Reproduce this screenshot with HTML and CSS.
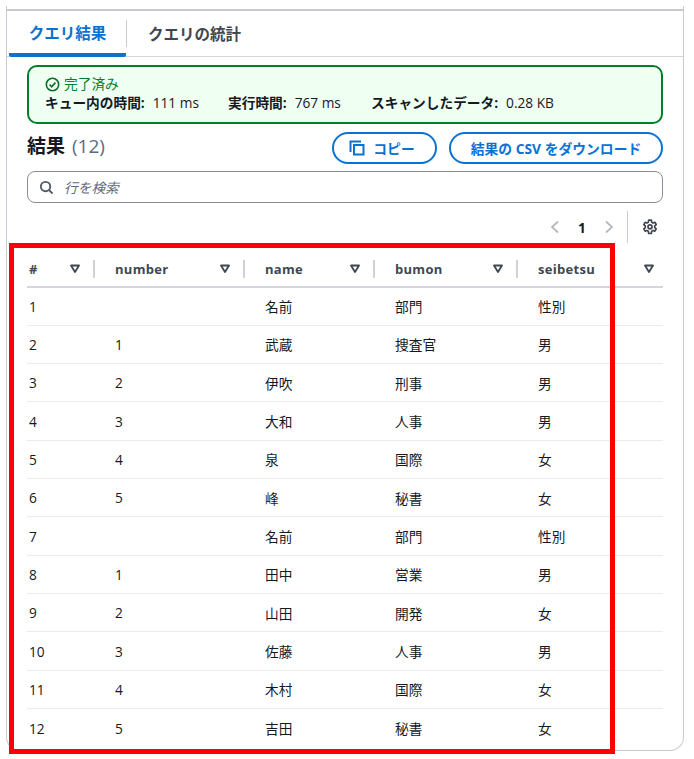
FILE: index.html
```html
<!DOCTYPE html>
<html lang="ja">
<head>
<meta charset="utf-8">
<title>クエリ結果</title>
<link rel="stylesheet" href="styles.css">
</head>
<body>
<main class="card">
  <nav class="tabs">
    <div class="tab active">クエリ結果</div>
    <div class="tab-sep"></div>
    <div class="tab">クエリの統計</div>
  </nav>
  <div class="content">
    <section class="flash">
      <div class="flash-status">
        <svg class="ico-check" viewBox="0 0 16 16"><circle cx="8" cy="8" r="6.6"/><path d="M4.9 8.2l2.2 2.2 4-4.4"/></svg>
        <span>完了済み</span>
      </div>
      <div class="flash-stats">
        <div class="stat stat-a"><b>キュー内の時間:</b><span>111 ms</span></div>
        <div class="stat stat-b"><b>実行時間:</b><span>767 ms</span></div>
        <div class="stat"><b>スキャンしたデータ:</b><span>0.28 KB</span></div>
      </div>
    </section>
    <div class="head">
      <h2 class="title">結果 <span class="count">(12)</span></h2>
      <div class="actions">
        <button class="btn btn-copy"><svg class="ico-copy" viewBox="0 0 16 16"><path d="M1.500 12V1.500H12"/><rect x="5" y="5" width="9.500" height="9.500"/></svg>コピー</button>
        <button class="btn btn-dl">結果の CSV をダウンロード</button>
      </div>
    </div>
    <div class="search">
      <svg class="ico-search" viewBox="0 0 16 16"><circle cx="7" cy="7" r="5"/><path d="M10.700 10.700L14.500 14.500"/></svg>
      <span>行を検索</span>
    </div>
    <div class="pager">
      <svg class="ico-chev" viewBox="0 0 16 16"><path d="M11 2.500L5 8l6 5.500"/></svg>
      <span class="page">1</span>
      <svg class="ico-chev" viewBox="0 0 16 16"><path d="M5 2.500L11 8l-6 5.500"/></svg>
      <div class="pager-sep"></div>
      <svg class="ico-gear" viewBox="0 0 16 16"><path d="M6.700 1.200h2.600l.4 2 1.300.75 1.900-.65 1.300 2.250-1.500 1.350v1.600l1.500 1.350-1.300 2.250-1.900-.65-1.300.75-.4 2.300H6.700l-.4-2.300L5 11.500l-1.900.65-1.300-2.250L3.300 8.550v-1.600L1.800 5.600l1.300-2.250L5 4l1.300-.75z"/><circle cx="8" cy="7.800" r="2"/></svg>
    </div>
    <table class="grid">
      <colgroup><col class="c1"><col class="c2"><col class="c3"><col class="c4"><col class="c5"></colgroup>
      <thead>
        <tr>
          <th><div class="th"><span>#</span><svg class="ico-sort" viewBox="0 0 12 10"><path d="M2 1.500h8L6 8z"/></svg></div></th>
          <th><div class="th"><span>number</span><svg class="ico-sort" viewBox="0 0 12 10"><path d="M2 1.500h8L6 8z"/></svg></div></th>
          <th><div class="th"><span>name</span><svg class="ico-sort" viewBox="0 0 12 10"><path d="M2 1.500h8L6 8z"/></svg></div></th>
          <th><div class="th"><span>bumon</span><svg class="ico-sort" viewBox="0 0 12 10"><path d="M2 1.500h8L6 8z"/></svg></div></th>
          <th><div class="th th-last"><span>seibetsu</span><svg class="ico-sort" viewBox="0 0 12 10"><path d="M2 1.500h8L6 8z"/></svg></div></th>
        </tr>
      </thead>
      <tbody>
        <tr><td>1</td><td></td><td>名前</td><td>部門</td><td>性別</td></tr>
        <tr><td>2</td><td>1</td><td>武蔵</td><td>捜査官</td><td>男</td></tr>
        <tr><td>3</td><td>2</td><td>伊吹</td><td>刑事</td><td>男</td></tr>
        <tr><td>4</td><td>3</td><td>大和</td><td>人事</td><td>男</td></tr>
        <tr><td>5</td><td>4</td><td>泉</td><td>国際</td><td>女</td></tr>
        <tr><td>6</td><td>5</td><td>峰</td><td>秘書</td><td>女</td></tr>
        <tr><td>7</td><td></td><td>名前</td><td>部門</td><td>性別</td></tr>
        <tr><td>8</td><td>1</td><td>田中</td><td>営業</td><td>男</td></tr>
        <tr><td>9</td><td>2</td><td>山田</td><td>開発</td><td>女</td></tr>
        <tr><td>10</td><td>3</td><td>佐藤</td><td>人事</td><td>男</td></tr>
        <tr><td>11</td><td>4</td><td>木村</td><td>国際</td><td>女</td></tr>
        <tr><td>12</td><td>5</td><td>吉田</td><td>秘書</td><td>女</td></tr>
      </tbody>
    </table>
  </div>
</main>
<div class="highlight"></div>
</body>
</html>
```

FILE: styles.css
```css
* { box-sizing: border-box; }
html, body { margin: 0; padding: 0; background: #fff; }
body {
  width: 694px;
  height: 759px;
  position: relative;
  overflow: hidden;
  padding: 6px 10px 8px 6px;
  font-family: "Open Sans", "Noto Sans CJK JP", sans-serif;
  font-size: 13.700px;
  color: #16191f;
}
.card {
  height: 745px;
  border: 1px solid #c9c9d2;
  border-top: 0;
  border-radius: 0 0 14px 14px;
  padding-top: 3px;
  overflow: hidden;
}
.tabs {
  display: flex;
  align-items: center;
  height: 48px;
  border-top: 2px solid #c9c9d2;
  border-bottom: 1px solid #d5d5dc;
  padding-left: 2px;
}
.tab {
  font-size: 15.500px;
  font-weight: 700;
  color: #414750;
  padding: 0 21px;
  white-space: nowrap;
}
.tab.active {
  width: 117px;
  padding: 0;
  text-align: center;
  color: #0972d3;
  align-self: stretch;
  line-height: 44px;
  border-bottom: 4px solid #0972d3;
  border-radius: 0 0 2px 2px;
  margin-bottom: -1px;
}
.tab-sep { width: 1px; height: 27px; background: #c9c9d2; }
.content { padding: 8px 20px 0; }
.flash {
  height: 59px;
  border: 2px solid #037f2c;
  border-radius: 10px;
  background: #effff1;
  padding: 8px 16px 0;
}
.flash-status {
  display: flex;
  align-items: center;
  gap: 4px;
  height: 18px;
  line-height: 18px;
  color: #037f2c;
}
.ico-check { width: 15px; height: 15px; fill: none; stroke: #0b6b2b; stroke-width: 1.700; }
.flash-stats { display: flex; height: 20px; line-height: 20px; color: #16191f; }
.stat { white-space: nowrap; }
.stat b { font-weight: 700; margin-right: 8px; }
.stat-a { width: 183px; }
.stat-b { width: 143px; }
.head {
  display: flex;
  align-items: center;
  justify-content: space-between;
  height: 40px;
  margin-top: 4px;
}
.title { margin: -4px 0 0; font-size: 19px; font-weight: 700; line-height: 24px; color: #16191f; }
.count { font-weight: 400; color: #5f6b7a; margin-left: 2px; }
.actions { display: flex; gap: 12px; }
.btn {
  height: 32px;
  border: 2px solid #0972d3;
  border-radius: 16px;
  background: #fff;
  color: #0972d3;
  font: 700 13.800px "Open Sans", "Noto Sans CJK JP", sans-serif;
  display: flex;
  align-items: center;
  justify-content: center;
  padding: 0 0 1px;
  white-space: nowrap;
}
.btn-copy { width: 105px; gap: 8px; padding-right: 5px; }
.btn-dl { width: 214px; }
.ico-copy { width: 16px; height: 16px; fill: none; stroke: #0972d3; stroke-width: 2; }
.search {
  height: 32px;
  margin-top: 3px;
  border: 1px solid #8c8c94;
  border-radius: 8px;
  display: flex;
  align-items: center;
  gap: 10px;
  padding-left: 11px;
  color: #5f6b7a;
  font-style: italic;
}
.ico-search { width: 15px; height: 15px; fill: none; stroke: #545b64; stroke-width: 2; }
.pager {
  height: 32px;
  margin-top: 8px;
  display: flex;
  align-items: center;
  justify-content: flex-end;
  padding-right: 5px;
}
.ico-chev { width: 16px; height: 16px; fill: none; stroke: #b4b8bf; stroke-width: 1.800; }
.page { font-weight: 700; width: 38px; text-align: center; }
.pager-sep { width: 1px; height: 32px; background: #c9c9d2; margin: 0 14px 0 10px; }
.ico-gear { width: 16px; height: 16px; fill: none; stroke: #414750; stroke-width: 1.700; stroke-linejoin: round; }
.grid {
  width: 636px;
  table-layout: fixed;
  border-collapse: collapse;
  margin-top: 7px;
}
.c1 { width: 88px; }
.c2 { width: 150px; }
.c3 { width: 130px; }
.c4 { width: 143px; }
.c5 { width: 125px; }
.grid th {
  height: 37px;
  padding: 1px 20px 0 0;
  border-bottom: 2px solid #d5d5dc;
  font-weight: 700;
  font-size: 13px;
  letter-spacing: 0.300px;
  text-align: left;
  color: #414750;
}
.grid th:last-child { padding-right: 0; }
.th {
  display: flex;
  align-items: center;
  justify-content: space-between;
  height: 18px;
  padding-right: 12px;
  border-right: 2px solid #d1d1d8;
}
.th-last { border-right: 0; padding-right: 8px; }
.ico-sort { width: 12px; height: 10px; fill: none; stroke: #414750; stroke-width: 1.800; stroke-linejoin: round; }
.grid td {
  height: 38.340px;
  padding: 0;
  border-bottom: 1px solid #e9ebed;
}
.grid th:first-child, .grid td:first-child { padding-left: 2px; }
.grid tr:last-child td { border-bottom: 0; }
.highlight {
  position: absolute;
  left: 9px;
  top: 243px;
  width: 606px;
  height: 511px;
  border: 5px solid #ff0000;
  pointer-events: none;
}
```
